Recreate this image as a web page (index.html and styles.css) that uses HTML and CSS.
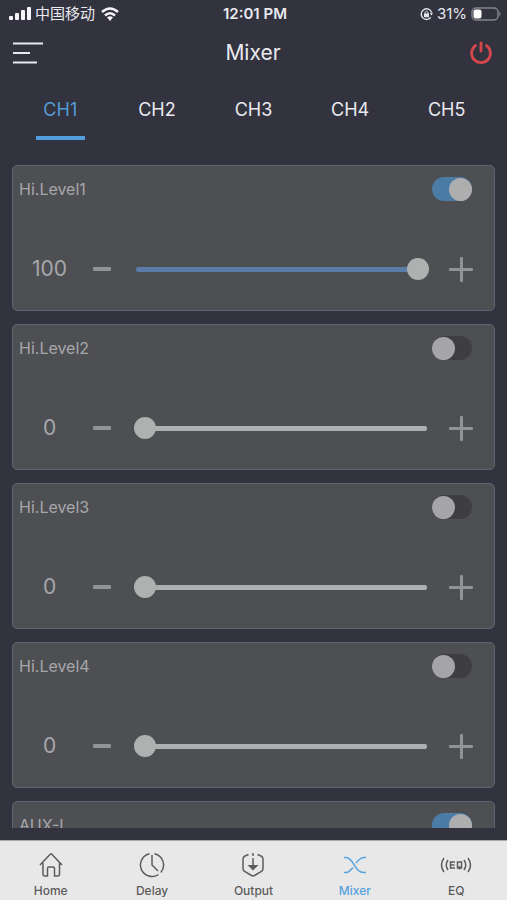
FILE: index.html
```html
<!DOCTYPE html>
<html lang="en">
<head>
<meta charset="utf-8">
<meta name="viewport" content="width=device-width, initial-scale=1">
<title>Mixer</title>
<link rel="stylesheet" href="styles.css">
</head>
<body>
<div class="status">
  <div class="status-left">
    <svg width="22" height="14" viewBox="0 0 22 14" fill="#f4f4f8" aria-hidden="true"><rect x="0" y="9" width="4" height="4" rx="1"/><rect x="6" y="6" width="4" height="7" rx="1"/><rect x="12" y="3" width="4" height="10" rx="1"/><rect x="18" y="0" width="4" height="13" rx="1"/></svg>
    <span class="carrier">中国移动</span>
    <svg class="wifi" width="18" height="14" viewBox="0 0 18 14" fill="none" stroke="#f4f4f8" stroke-width="2.6" aria-hidden="true"><path d="M1 5Q9-2 17 5"/><path d="M4 8.500Q9 4 14 8.500"/><path d="M6 10.500Q9 8 12 10.500L9 14Z" fill="#f4f4f8" stroke="none"/></svg>
  </div>
  <div class="clock">12:01 PM</div>
  <div class="status-right">
    <svg width="13" height="14" viewBox="0 0 13 14" fill="none" stroke="#e4e4ec" stroke-width="1.400" aria-hidden="true"><path d="M11.600 5.500A5.300 5.300 0 1 0 10.800 10.300"/><path d="M9.800 6.200L11.700 8.600L13 5.800Z" fill="#e4e4ec" stroke="none"/><rect x="4" y="6.500" width="5" height="3.700" fill="#e4e4ec" stroke="none"/><path d="M5 7V5.300Q6.500 3.300 8 5.300V7" stroke-width="1"/></svg>
    <span class="percent">31%</span>
    <svg width="30" height="14" viewBox="0 0 30 14" aria-hidden="true"><rect x="1" y="1" width="26" height="12" rx="4" fill="none" stroke="#85858f" stroke-width="1.400"/><rect x="2.500" y="2.500" width="8" height="9" rx="2" fill="#fff"/><path d="M28.300 4.500Q31 7 28.300 9.500Z" fill="#85858f"/></svg>
  </div>
</div>
<header class="header">
  <button class="icon-button" type="button" aria-label="Menu">
    <svg width="30" height="24" viewBox="0 0 30 24" stroke="#e6e8f4" stroke-width="2.200" aria-hidden="true"><path d="M0 2.500H30M0 12H17M0 21.500H24"/></svg>
  </button>
  <h1>Mixer</h1>
  <button class="icon-button power" type="button" aria-label="Power">
    <svg width="24" height="24" viewBox="0 0 24 24" fill="none" stroke="#d5474a" stroke-width="2.800" stroke-linecap="round" aria-hidden="true"><path d="M6.500 4.600A9.400 9.400 0 1 0 17.500 4.600M12 2V10"/></svg>
  </button>
</header>
<nav class="tabs" aria-label="Channels">
  <button class="tab active" type="button">CH1</button>
  <button class="tab" type="button">CH2</button>
  <button class="tab" type="button">CH3</button>
  <button class="tab" type="button">CH4</button>
  <button class="tab" type="button">CH5</button>
</nav>
<main class="channels">
  <section class="card">
    <div class="card-head"><label for="s1">Hi.Level1</label><input class="switch" id="s1" type="checkbox" checked></div>
    <div class="level">
      <output for="r1">100</output>
      <button class="step minus" type="button" aria-label="Decrease"></button>
      <div class="slider full"><input id="r1" type="range" min="0" max="100" value="100" aria-label="Hi.Level1 level"></div>
      <button class="step plus" type="button" aria-label="Increase"></button>
    </div>
  </section>
  <section class="card">
    <div class="card-head"><label for="s2">Hi.Level2</label><input class="switch" id="s2" type="checkbox"></div>
    <div class="level">
      <output for="r2">0</output>
      <button class="step minus" type="button" aria-label="Decrease"></button>
      <div class="slider"><input id="r2" type="range" min="0" max="100" value="0" aria-label="Hi.Level2 level"></div>
      <button class="step plus" type="button" aria-label="Increase"></button>
    </div>
  </section>
  <section class="card">
    <div class="card-head"><label for="s3">Hi.Level3</label><input class="switch" id="s3" type="checkbox"></div>
    <div class="level">
      <output for="r3">0</output>
      <button class="step minus" type="button" aria-label="Decrease"></button>
      <div class="slider"><input id="r3" type="range" min="0" max="100" value="0" aria-label="Hi.Level3 level"></div>
      <button class="step plus" type="button" aria-label="Increase"></button>
    </div>
  </section>
  <section class="card">
    <div class="card-head"><label for="s4">Hi.Level4</label><input class="switch" id="s4" type="checkbox"></div>
    <div class="level">
      <output for="r4">0</output>
      <button class="step minus" type="button" aria-label="Decrease"></button>
      <div class="slider"><input id="r4" type="range" min="0" max="100" value="0" aria-label="Hi.Level4 level"></div>
      <button class="step plus" type="button" aria-label="Increase"></button>
    </div>
  </section>
  <section class="card">
    <div class="card-head"><label for="s5">AUX-L</label><input class="switch" id="s5" type="checkbox" checked></div>
  </section>
</main>
<nav class="bottom" aria-label="Main">
  <a href="#home"><svg width="26" height="26" viewBox="0 0 26 26" aria-hidden="true"><path d="M2 13L12.200 2.300Q13 1.500 13.800 2.300L24 13M5 11V22Q5 24 7 24H9.500V16.500Q9.500 15 11 15H15Q16.500 15 16.500 16.500V24H19.500Q21.500 24 21.500 22V11"/></svg>Home</a>
  <a href="#delay"><svg width="26" height="26" viewBox="0 0 26 26" aria-hidden="true"><path d="M10.500 1.800A11.500 11.500 0 1 0 19.500 22.500M15.500 1.800A11.500 11.500 0 0 1 21.800 20.500M13 3V13L19 19"/></svg>Delay</a>
  <a href="#output"><svg width="26" height="26" viewBox="0 0 26 26" aria-hidden="true"><path d="M8.500 2.500L5 4Q3 5 3 7V16.500Q3 18.500 5 19.600L11.500 23.500Q13 24.300 14.500 23.500L21 19.600Q23 18.500 23 16.500V7Q23 5 21 4L17.500 2.500M13 1V4M13 6V14"/><path d="M7.500 13H18.500L13 18.500Z" fill="currentColor" stroke="none"/></svg>Output</a>
  <a class="active" href="#mixer" aria-current="page"><svg width="26" height="26" viewBox="0 0 26 26" aria-hidden="true"><path d="M2 5.500H4C12 5.500 12 20.500 22 20.500H24M2 20.500H4C7 20.500 9 18 11 15.500M14 11C16.500 8 18.500 5.500 22 5.500H24"/></svg>Mixer</a>
  <a href="#eq"><svg width="32" height="26" viewBox="0 0 32 26" aria-hidden="true"><path d="M4 6Q-1 13 4 20M8 8Q4.500 13 8 18M28 6Q33 13 28 20M24 8Q27.500 13 24 18"/><path d="M15 10H10.500V16H15M10.500 13H14.500M17.500 10H21.500V16H17.500ZM19.500 14V17.500"/></svg>EQ</a>
</nav>
</body>
</html>
```
FILE: styles.css
```css
* { box-sizing: border-box; }

body {
  margin: 0;
  height: 100vh;
  display: flex;
  flex-direction: column;
  background: #32333f;
  color: #e9e9ef;
  font-family: Inter, "Noto Sans CJK SC", sans-serif;
}

button {
  padding: 0;
  border: 0;
  background: none;
  color: inherit;
  font: inherit;
}

.status {
  display: grid;
  grid-template-columns: 1fr auto 1fr;
  align-items: center;
  height: 27px;
  padding: 0 6px 0 9px;
  font-size: 15px;
}

.status-left,
.status-right {
  display: flex;
  align-items: center;
  gap: 4px;
}

.status-right { justify-content: flex-end; }
.carrier { line-height: 20px; }
.wifi { margin-left: 2px; }
.clock { font-weight: 600; }

.header {
  display: grid;
  grid-template-columns: 1fr auto 1fr;
  align-items: center;
  height: 51px;
  padding: 0 14px 0 13px;
}

.header h1 {
  margin: 0;
  font-size: 21px;
  font-weight: 400;
}

.icon-button {
  display: grid;
  justify-self: start;
}

.power { justify-self: end; }

.tabs {
  display: grid;
  grid-template-columns: repeat(5, 1fr);
  height: 62px;
  margin: 0 12px;
}

.tab {
  display: flex;
  flex-direction: column;
  align-items: center;
  justify-content: space-between;
  padding-top: 20px;
  font-size: 18px;
  line-height: 24px;
}

.tab::after {
  content: "";
  width: 49px;
  height: 4px;
}

.tab.active { color: #559bd6; }
.tab.active::after { background: #519ddd; }

.channels {
  flex: 1;
  min-height: 0;
  display: flex;
  flex-direction: column;
  gap: 13px;
  margin: 25px 12px 12px;
  overflow-y: auto;
  scrollbar-width: none;
}

.card {
  flex: none;
  height: 146px;
  border: 1px solid #63646d;
  border-radius: 5px;
  background: #4e4f52;
  color: #a6a7ab;
}

.card-head {
  display: flex;
  align-items: center;
  justify-content: space-between;
  height: 46px;
  padding: 0 22px 0 6px;
  font-size: 16px;
}

.switch {
  display: flex;
  align-items: center;
  appearance: none;
  width: 40px;
  height: 24px;
  margin: 0;
  border-radius: 12px;
  background: #3e3d41;
}

.switch::before {
  content: "";
  width: 23px;
  height: 23px;
  border-radius: 50%;
  background: #a5a5a7;
}

.switch:checked {
  justify-content: flex-end;
  background: #4a7ca6;
}

.switch:checked::before { background: #aeaeaf; }

.level {
  display: grid;
  grid-template-columns: 73px 32px 1fr 32px;
  align-items: center;
  height: 32px;
  margin-top: 41px;
  padding-right: 17px;
}

.level output {
  text-align: center;
  font-size: 21px;
  line-height: 32px;
}

.step {
  display: grid;
  place-items: center;
  height: 32px;
}

.step::before,
.step::after {
  grid-area: 1 / 1;
  border-radius: 1px;
  background: #929396;
}

.minus::before {
  content: "";
  width: 18px;
  height: 4px;
}

.plus::before {
  content: "";
  width: 24px;
  height: 3px;
}

.plus::after {
  content: "";
  width: 3px;
  height: 25px;
}

.slider {
  display: grid;
  align-items: center;
  margin: 0 16px;
}

.slider::before {
  content: "";
  grid-area: 1 / 1;
  height: 5px;
  margin: 0 2px;
  border-radius: 2px;
  background: #aeafb0;
}

.slider.full::before { background: #597ca8; }

.slider input {
  grid-area: 1 / 1;
  appearance: none;
  width: 100%;
  height: 22px;
  margin: 0;
  background: transparent;
}

.slider input::-webkit-slider-thumb {
  appearance: none;
  width: 22px;
  height: 22px;
  border-radius: 50%;
  background: #afb0b0;
}

.bottom {
  display: grid;
  grid-template-columns: repeat(5, 1fr);
  height: 60px;
  border-top: 1px solid #a8a8ae;
  background: #e8e8e8;
}

.bottom a {
  display: flex;
  flex-direction: column;
  align-items: center;
  gap: 4px;
  padding-top: 11px;
  color: #5c5c5c;
  font-size: 12px;
  font-weight: 500;
  line-height: 18px;
  text-decoration: none;
}

.bottom svg {
  fill: none;
  stroke: currentColor;
  stroke-width: 1.5px;
}

.bottom .active { color: #57a3de; }
```
